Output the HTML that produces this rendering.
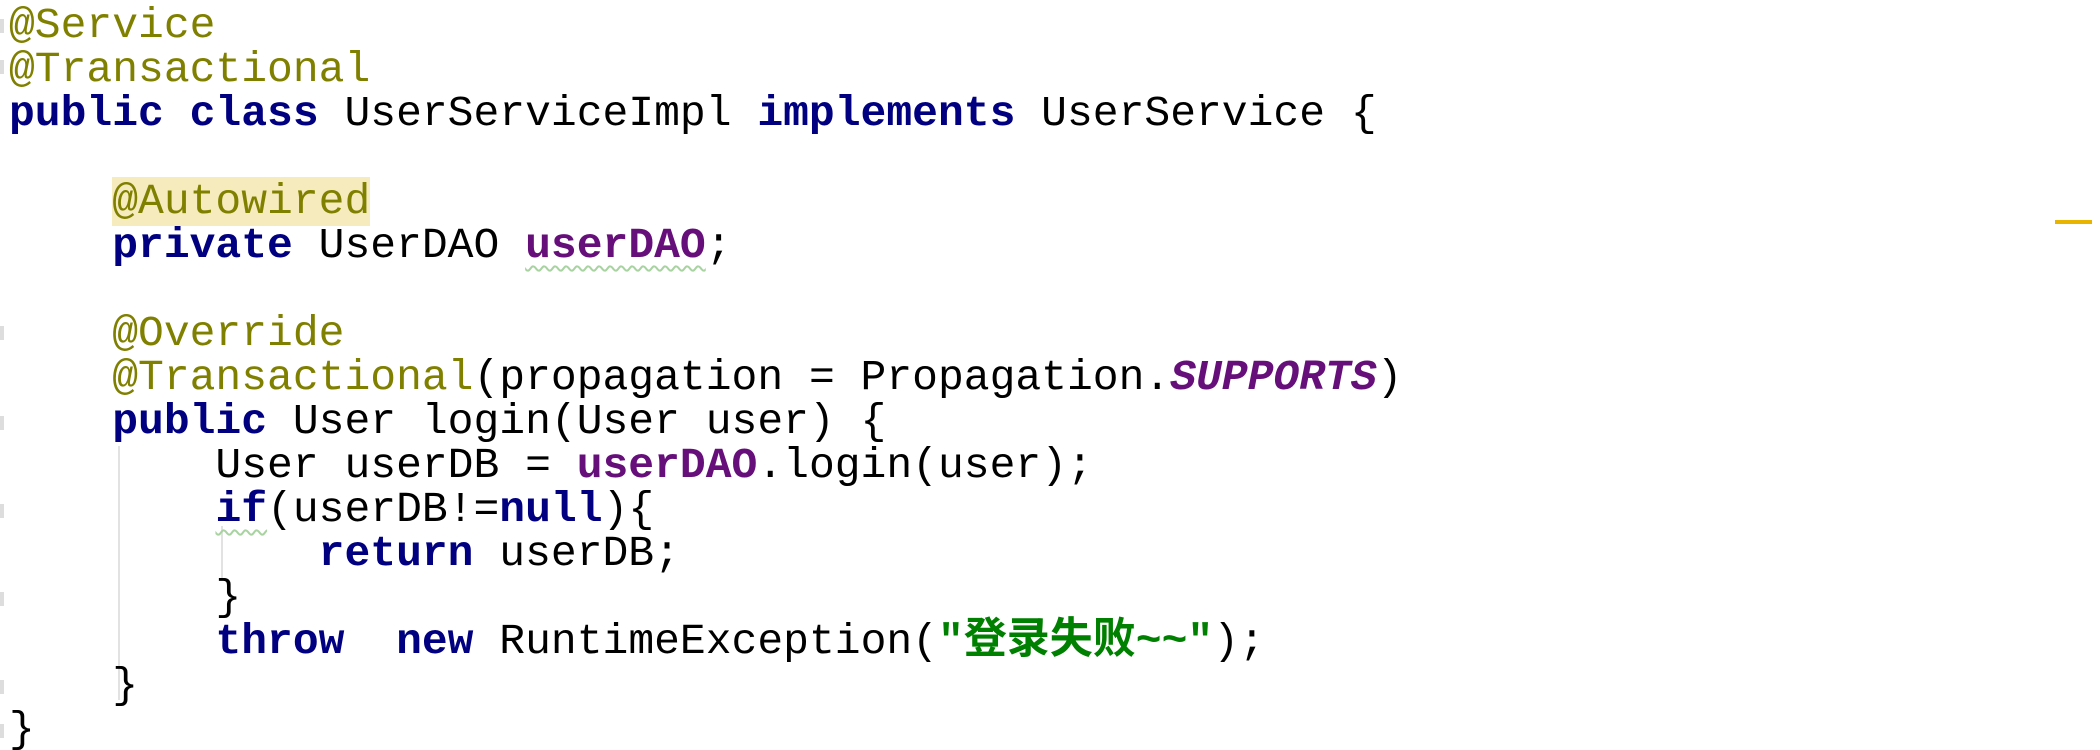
<!DOCTYPE html>
<html><head><meta charset="utf-8"><style>
html,body{margin:0;padding:0;background:#fff;width:2100px;height:750px;overflow:hidden;position:relative}
pre{margin:0;position:absolute;left:9px;top:4px;font-family:"Liberation Mono","Noto Sans CJK SC",monospace;font-size:43px;line-height:44px;color:#000}
.a{color:#808000}
.k{color:#000080;font-weight:bold}
.f{color:#660e7a;font-weight:bold}
.i{color:#660e7a;font-weight:bold;font-style:italic}
.s{color:#008000;font-weight:bold}
.hl{background:#f6ebbc}
.w{text-decoration:underline wavy #a8d3a0;text-decoration-thickness:2px;text-underline-offset:8px}
.g{position:absolute;background:#e2e2e2;width:2px}
.m{position:absolute;left:0;width:4px;height:14px;background:#ddd}
</style></head><body>
<div class="g" style="left:118px;top:446px;height:254px"></div>
<div class="g" style="left:221px;top:526px;height:54px"></div>
<div class="m" style="top:19px"></div>
<div class="m" style="top:60px"></div>
<div class="m" style="top:326px"></div>
<div class="m" style="top:416px"></div>
<div class="m" style="top:504px"></div>
<div class="m" style="top:592px"></div>
<div class="m" style="top:680px"></div>
<div class="m" style="top:724px"></div>
<div style="position:absolute;left:2055px;top:220px;width:37px;height:4px;background:#e8b400"></div>
<pre><span class="a">@Service</span>
<span class="a">@Transactional</span>
<span class="k">public class</span> UserServiceImpl <span class="k">implements</span> UserService {

    <span class="a hl">@Autowired</span>
    <span class="k">private</span> UserDAO <span class="f w">userDAO</span>;

    <span class="a">@Override</span>
    <span class="a">@Transactional</span>(propagation = Propagation.<span class="i">SUPPORTS</span>)
    <span class="k">public</span> User login(User user) {
        User userDB = <span class="f">userDAO</span>.login(user);
        <span class="k w">if</span>(userDB!=<span class="k">null</span>){
            <span class="k">return</span> userDB;
        }
        <span class="k">throw</span>  <span class="k">new</span> RuntimeException(<span class="s">"登录失败~~"</span>);
    }
}</pre>
</body></html>
